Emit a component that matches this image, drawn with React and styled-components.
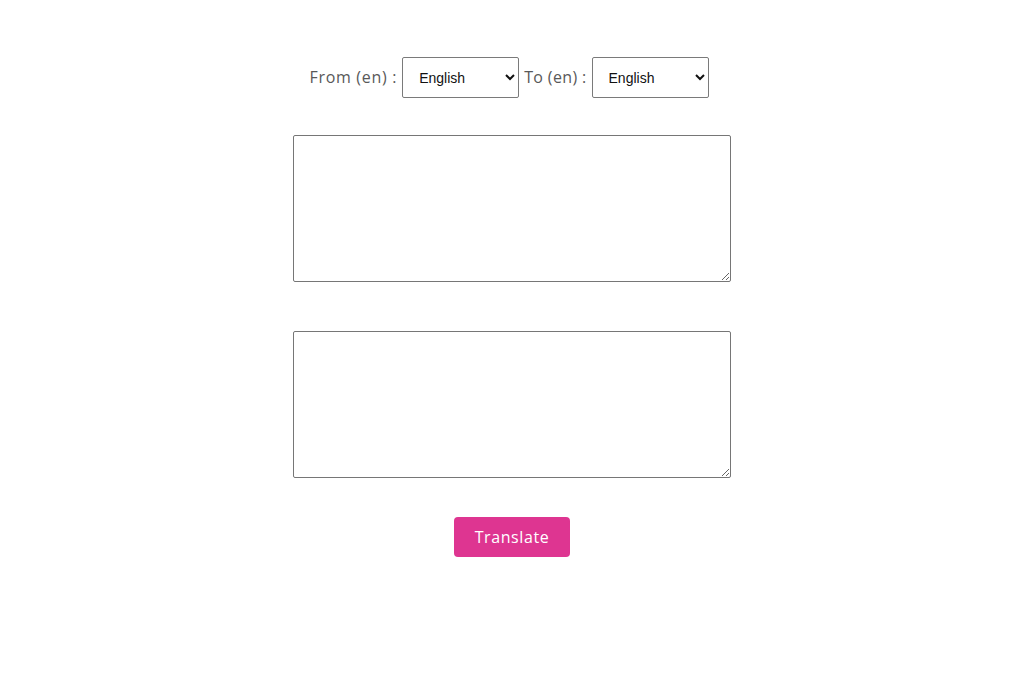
import React from "react";
import styled, { createGlobalStyle } from "styled-components";

const Global = createGlobalStyle`
  body {
    margin: 0;
    background: #fff;
    font-family: "Open Sans", "Liberation Sans", sans-serif;
  }
`;

const Page = styled.main`
  display: flex;
  flex-direction: column;
  align-items: center;
  padding-top: 57px;
`;

const LangRow = styled.div`
  display: flex;
  align-items: center;
  gap: 5px;
  margin-left: -6px;
`;

const Label = styled.label`
  font-size: 16px;
  color: #595959;
  letter-spacing: ${(p) => p.$spacing}px;
  margin-top: -2px;
`;

const Select = styled.select`
  width: 117px;
  height: 41px;
  padding: 0 6px 0 12px;
  border: 1px solid #7a7a7a;
  border-radius: 2px;
  background: #fff;
  font-family: "Liberation Sans", Arial, sans-serif;
  font-size: 14px;
  color: #111;
`;

const TextBox = styled.textarea`
  box-sizing: border-box;
  width: 438px;
  height: 147px;
  margin-top: ${(p) => p.$gap}px;
  border: 1px solid #767676;
  border-radius: 2px;
  font-family: "Liberation Mono", monospace;
  font-size: 13px;
`;

const Button = styled.button`
  margin-top: 39px;
  width: 116px;
  height: 40px;
  border: none;
  border-radius: 4px;
  background: #de3591;
  color: #fff;
  font-family: "Open Sans", "Liberation Sans", sans-serif;
  font-size: 16px;
  letter-spacing: 0.6px;
  cursor: pointer;
`;

export default function App() {
  return (
    <>
      <Global />
      <Page>
        <LangRow>
          <Label $spacing={0.7}>From (en) :</Label>
          <Select defaultValue="en">
            <option value="en">English</option>
          </Select>
          <Label $spacing={0.35}>To (en) :</Label>
          <Select defaultValue="en">
            <option value="en">English</option>
          </Select>
        </LangRow>
        <TextBox $gap={37} />
        <TextBox $gap={49} />
        <Button>Translate</Button>
      </Page>
    </>
  );
}
